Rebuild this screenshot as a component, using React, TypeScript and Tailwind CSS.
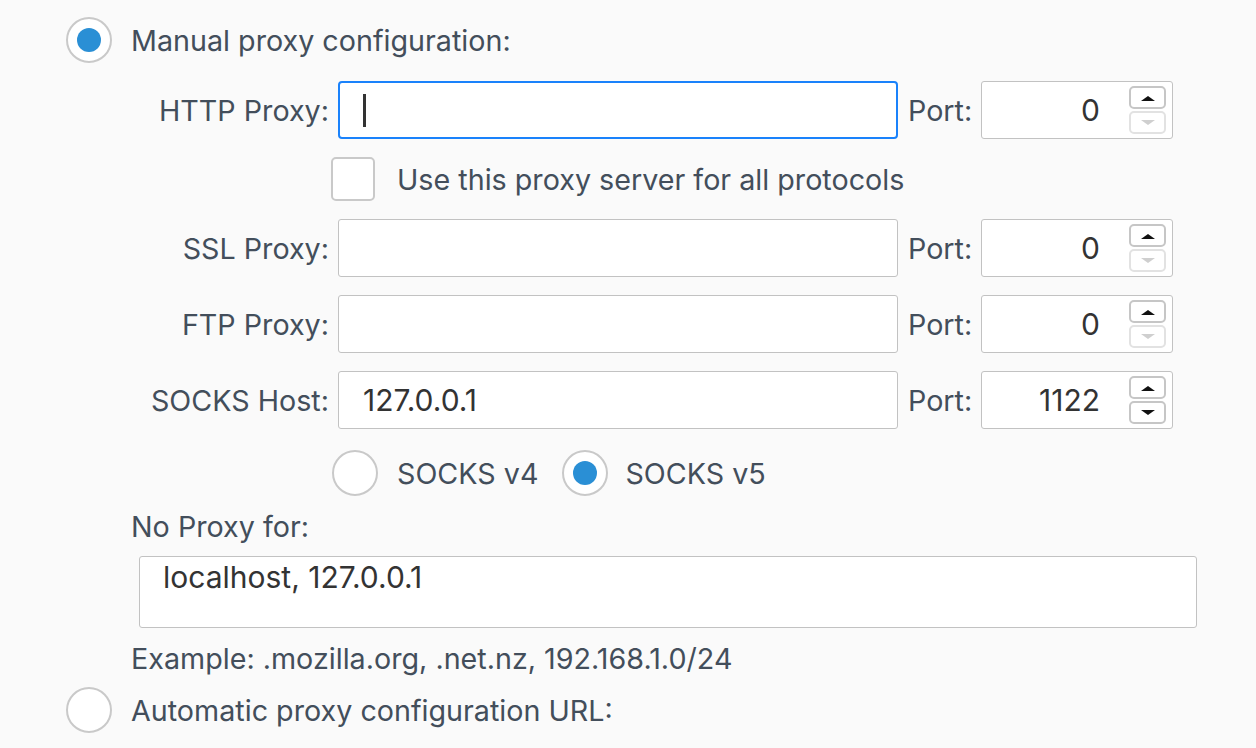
import React from "react";

const font = { fontFamily: "Inter, 'Noto Sans', sans-serif" };

function Radio({ checked }: { checked?: boolean }) {
  return (
    <div className="w-[46px] h-[46px] rounded-full border-[2px] border-[#c9c9c9] bg-white flex items-center justify-center shrink-0">
      {checked && <div className="w-[24px] h-[24px] rounded-full bg-[#2a8fd5]" />}
    </div>
  );
}

function Spinner({ upEnabled = true, downEnabled = true }: { upEnabled?: boolean; downEnabled?: boolean }) {
  return (
    <div className="flex flex-col gap-[2px] mr-[6px]">
      <div className={`w-[37px] h-[23px] rounded-[5px] border-[2px] ${upEnabled ? "border-[#c6c6c6]" : "border-[#e2e2e2]"} bg-white flex items-center justify-center`}>
        <svg width="16" height="8" viewBox="0 0 16 8"><path d="M1 7 L8 2 L15 7 Z" fill={upEnabled ? "#111" : "#cfcfcf"} /></svg>
      </div>
      <div className={`w-[37px] h-[23px] rounded-[5px] border-[2px] ${downEnabled ? "border-[#c6c6c6]" : "border-[#e2e2e2]"} bg-white flex items-center justify-center`}>
        <svg width="16" height="8" viewBox="0 0 16 8"><path d="M1 1 L8 6 L15 1 Z" fill={downEnabled ? "#111" : "#cfcfcf"} /></svg>
      </div>
    </div>
  );
}

function ProxyRow({
  label,
  value,
  focused,
  port,
  downEnabled = false,
  mt,
}: {
  label: string;
  value?: string;
  focused?: boolean;
  port: string;
  downEnabled?: boolean;
  mt: string;
}) {
  return (
    <div className={`flex items-center h-[58px] ${mt}`}>
      <div className="w-[329px] text-right text-[28.7px] text-[#434e5b] whitespace-nowrap pt-[2px]">{label}</div>
      <div
        className={`ml-[9px] w-[560px] h-[58px] bg-white flex items-center pl-[24px] text-[30px] text-[#333] ${
          focused ? "border-[2.5px] border-[#1a82fb] rounded-[4px]" : "border-[1.5px] border-[#c2c2c2] rounded-[3px]"
        }`}
      >
        {focused ? <div className="w-[3px] h-[33px] bg-[#333] ml-[-1px]" /> : value}
      </div>
      <div className="ml-[10px] w-[73px] text-[28.7px] text-[#434e5b] pt-[2px]">Port:</div>
      <div className="w-[192px] h-[58px] bg-white border-[1.5px] border-[#c2c2c2] rounded-[3px] flex items-center justify-end">
        <div className="text-[30px] text-[#333] mr-[29px]">{port}</div>
        <Spinner downEnabled={downEnabled} />
      </div>
    </div>
  );
}

export default function App() {
  return (
    <div className="w-[1256px] h-[748px] bg-[#fafafa] overflow-hidden pt-[17px]" style={font}>
      <div className="flex items-center h-[46px] pl-[66px]">
        <Radio checked />
        <div className="ml-[19px] text-[28.7px] text-[#434e5b] pt-[2px]">Manual proxy configuration:</div>
      </div>

      <ProxyRow label="HTTP Proxy:" focused port="0" mt="mt-[18px]" />

      <div className="flex items-center h-[44px] mt-[18px] pl-[331px]">
        <div className="w-[44px] h-[44px] rounded-[5px] border-[2px] border-[#c9c9c9] bg-white" />
        <div className="ml-[22px] text-[28.7px] text-[#434e5b] pt-[2px]">Use this proxy server for all protocols</div>
      </div>

      <ProxyRow label="SSL Proxy:" value="" port="0" mt="mt-[18px]" />
      <ProxyRow label="FTP Proxy:" value="" port="0" mt="mt-[18px]" />
      <ProxyRow label="SOCKS Host:" value="127.0.0.1" port="1122" downEnabled mt="mt-[18px]" />

      <div className="flex items-center h-[46px] mt-[21px] pl-[332px]">
        <Radio />
        <div className="ml-[19px] text-[28.7px] text-[#434e5b] pt-[2px]">SOCKS v4</div>
        <div className="ml-[24px]">
          <Radio checked />
        </div>
        <div className="ml-[17px] text-[28.7px] text-[#434e5b] pt-[2px]">SOCKS v5</div>
      </div>

      <div className="mt-[12px] h-[36px] leading-[36px] pl-[131px] text-[28.7px] text-[#434e5b] pt-[1px]">No Proxy for:</div>

      <div className="ml-[139px] mt-[12px] w-[1058px] h-[72px] bg-white border-[1.5px] border-[#c2c2c2] rounded-[3px] pl-[23px] pt-[2px] text-[30px] text-[#333] leading-[36px]">
        localhost, 127.0.0.1
      </div>

      <div className="mt-[12px] h-[36px] leading-[36px] pl-[131px] text-[28.7px] text-[#434e5b] pt-[1px]">
        Example: .mozilla.org, .net.nz, 192.168.1.0/24
      </div>

      <div className="flex items-center h-[46px] mt-[11px] pl-[66px]">
        <Radio />
        <div className="ml-[19px] text-[28.7px] text-[#434e5b] pt-[2px]">Automatic proxy configuration URL:</div>
      </div>
    </div>
  );
}
